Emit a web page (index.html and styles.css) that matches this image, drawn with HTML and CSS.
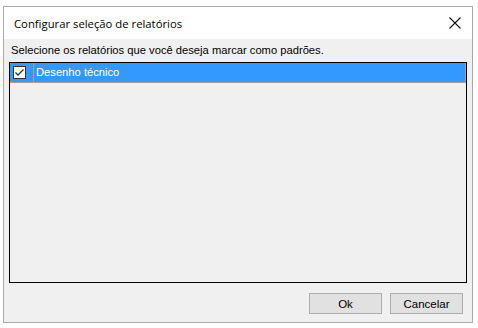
FILE: index.html
```html
<!DOCTYPE html>
<html lang="pt-BR">
<head>
  <meta charset="UTF-8" />
  <title>Configurar seleção de relatórios</title>
  <link rel="stylesheet" href="styles.css">
</head>
<body>
  <div class="window">
    <div class="titlebar">
      <span class="title">Configurar seleção de relatórios</span>
      <svg class="close" width="12" height="12" viewBox="0 0 12 12">
        <path d="M0.5 0.5 L11.5 11.5 M11.5 0.5 L0.5 11.5" stroke="#111" stroke-width="1.1" fill="none" />
      </svg>
    </div>
    <div class="content">
      <div class="label">Selecione os relatórios que você deseja marcar como padrões.</div>
      <div class="list">
        <div class="row selected">
          <div class="check-cell">
            <span class="checkbox">
              <svg width="11" height="11" viewBox="0 0 11 11">
                <path d="M1.5 5.5 L4 8 L9.5 2.5" stroke="#333" stroke-width="1.3" fill="none" />
              </svg>
            </span>
          </div>
          <div class="name">Desenho técnico</div>
        </div>
      </div>
      <div class="buttons">
        <button class="btn">Ok</button>
        <button class="btn">Cancelar</button>
      </div>
    </div>
  </div>
</body>
</html>
```
FILE: styles.css
```css
body { margin: 0; background: #fff; font-family: "Liberation Sans", Arial, sans-serif; font-size: 11.2px; color: #000; }
.window { margin: 6px 0 0 3px; width: 468px; height: 315px; border: 1px solid #aaa; background: #f0f0f0; display: flex; flex-direction: column; }
.titlebar { height: 32px; background: #fff; display: flex; align-items: center; justify-content: space-between; padding: 0 11px 0 10px; }
.title { font-family: "Open Sans", "Noto Sans", sans-serif; font-size: 11.3px; }
.close { display: block; }
.content { flex: 1; display: flex; flex-direction: column; padding: 0 5px 7px 5px; }
.label { padding: 5px 0 0 2px; height: 18px; }
.list { height: 219px; border: 1px solid #000; background: #f0f0f0; }
.row { display: flex; height: 19px; border-right: 1px solid #a0a0a0; border-bottom: 1px solid #a0a0a0; }
.row.selected { background: #3399ff; color: #fff; }
.check-cell { width: 20px; border-right: 1px solid #a0a0a0; display: flex; align-items: center; padding-left: 3px; }
.checkbox { width: 11px; height: 11px; border: 1px solid #333; background: #fff; display: block; }
.checkbox svg { display: block; }
.name { padding-left: 2px; line-height: 19px; }
.buttons { display: flex; justify-content: flex-end; gap: 8px; margin-top: 10px; padding-right: 4px; }
.btn { width: 73px; height: 21px; border: 1px solid #adadad; background: #e1e1e1; font-family: "Liberation Sans", Arial, sans-serif; font-size: 11.5px; color: #000; padding: 0; }
```
